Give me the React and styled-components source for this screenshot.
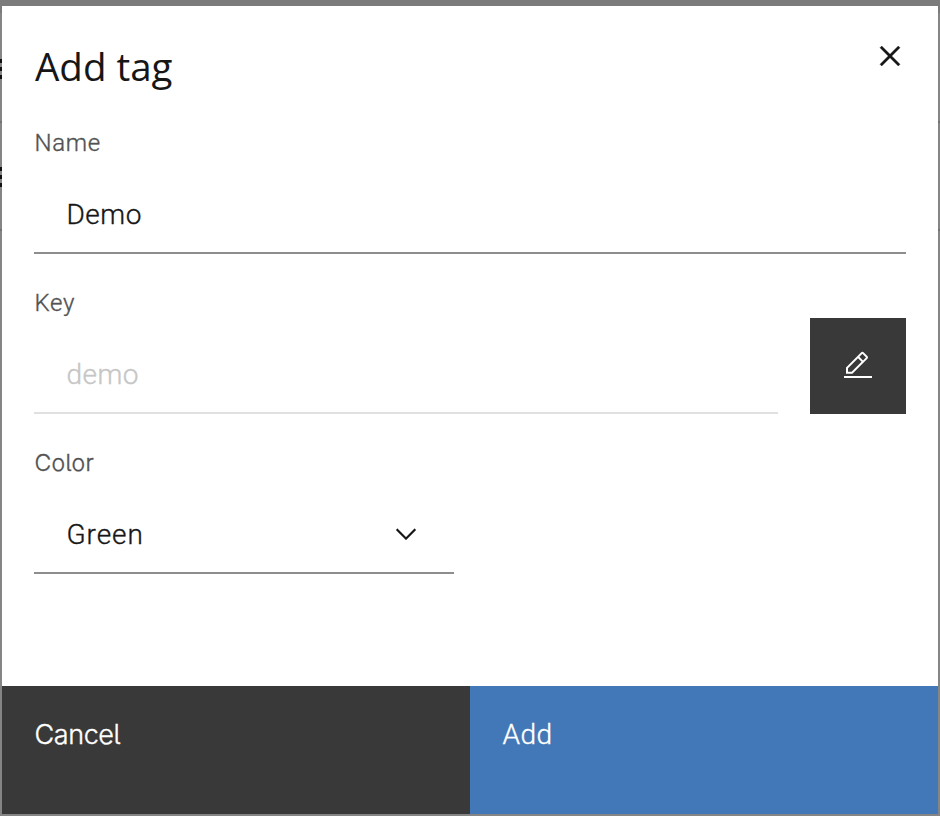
import React from "react";
import styled, { createGlobalStyle } from "styled-components";

const GlobalStyle = createGlobalStyle`
  *, *::before, *::after { box-sizing: border-box; }
  body { margin: 0; overflow: hidden; background: #858585; }
  button, input { font: inherit; letter-spacing: inherit; border: 0; border-radius: 0; margin: 0; }
`;

const Backdrop = styled.div`
  width: 940px;
  height: 816px;
  display: grid;
  grid-template-columns: 2px 936px 2px;
  padding: 6px 0 2px;
  background: linear-gradient(#7b7b7b 13px, #858585 13px);
  font-family: Roboto, "Liberation Sans", sans-serif;
  font-weight: 300;
  -webkit-text-stroke: 0.35px currentColor;
  color: #161616;
`;

const Rail = styled.div`
  display: flex;
  flex-direction: column;
`;

const RailCell = styled.div`
  height: ${(p) => p.$height}px;
  padding-top: ${(p) => p.$offset}px;
  border-bottom: 2px solid #727272;
`;

const MenuBars = styled.div`
  height: 20px;
  background: repeating-linear-gradient(#111 0 4px, transparent 4px 8px);
`;

const Modal = styled.section`
  display: flex;
  flex-direction: column;
  background: #fff;
`;

const Header = styled.header`
  display: flex;
  justify-content: space-between;
  height: 124px;
  padding: 0 0 0 33px;
`;

const Title = styled.h2`
  margin: 0;
  padding-top: 34px;
  font: 400 38.5px/52px "Open Sans", sans-serif;
  letter-spacing: 0;
  -webkit-text-stroke: 0;
`;

const CloseButton = styled.button`
  width: 96px;
  height: 96px;
  padding: 4px 0 0;
  display: grid;
  place-items: center;
  background: transparent;
  color: #161616;
`;

const Content = styled.div`
  flex: 1;
  display: flex;
  flex-direction: column;
  gap: 32px;
  padding: 0 32px;
`;

const FieldRow = styled.div`
  display: flex;
  align-items: flex-end;
  gap: 32px;
  height: 128px;
  padding-bottom: 4px;
`;

const Field = styled.div`
  width: ${(p) => p.$width};
  height: 124px;
  display: flex;
  flex-direction: column;
`;

const Label = styled.label`
  height: 28px;
  padding-left: 0.5px;
  color: #525252;
  font-size: ${(p) => (p.$tailed ? 23 : 24)}px;
  line-height: 26px;
  letter-spacing: ${(p) => (p.$tailed ? "0.3px" : "0.7px")};
  font-family: ${(p) => (p.$tailed ? "Inter" : "Roboto")}, sans-serif;
  font-feature-settings: "cv05" ${(p) => (p.$tailed ? 1 : 0)};
`;

const Control = styled.div`
  height: 96px;
  display: flex;
  align-items: center;
  justify-content: space-between;
  padding: 20px 32px 0 32.5px;
  border-bottom: 2px solid ${(p) => (p.$disabled ? "#e0e0e0" : "#8d8d8d")};
  color: ${(p) => (p.$disabled ? "#c6c6c6" : "#161616")};
  font-size: 28px;
  line-height: 36px;
  letter-spacing: ${(p) => p.$spacing || "0.5px"};
`;

const EditButton = styled.button`
  flex: none;
  width: 96px;
  height: 96px;
  display: grid;
  place-items: center;
  padding: 0 0 2px;
  background: #393939;
  color: #fff;
`;

const Footer = styled.footer`
  display: grid;
  grid-template-columns: 1fr 1fr;
  height: 128px;
`;

const FooterButton = styled.button`
  display: flex;
  align-items: flex-start;
  padding: 31px 32.5px;
  background: ${(p) => (p.$primary ? "#4378b8" : "#393939")};
  color: #fff;
  text-align: left;
  line-height: 36px;
  font-size: ${(p) => (p.$primary ? 28 : 27)}px;
  font-family: ${(p) => (p.$primary ? "Roboto" : "Inter")}, sans-serif;
  font-feature-settings: "cv05" ${(p) => (p.$primary ? 0 : 1)};
  letter-spacing: ${(p) => (p.$primary ? "0.5px" : "-0.4px")};
`;

const Icon = styled.svg`
  display: block;
  fill: currentColor;
`;

const ChevronIcon = styled(Icon)`
  margin-bottom: 2px;
`;

function BackgroundRail({ bars }) {
  return (
    <Rail>
      <RailCell $height={117} $offset={53}>{bars && <MenuBars />}</RailCell>
      <RailCell $height={108} $offset={44}>{bars && <MenuBars />}</RailCell>
    </Rail>
  );
}

export default function App() {
  return (
    <>
      <GlobalStyle />
      <Backdrop>
        <BackgroundRail bars />
        <Modal role="dialog" aria-label="Add tag">
          <Header>
            <Title>Add tag</Title>
            <CloseButton aria-label="Close">
              <Icon width="40" height="40" viewBox="0 0 32 32">
                <path d="M24 9.4 22.6 8 16 14.6 9.4 8 8 9.4 14.6 16 8 22.6 9.4 24 16 17.4 22.6 24 24 22.6 17.4 16z" stroke="currentColor" strokeWidth="0.3" />
              </Icon>
            </CloseButton>
          </Header>
          <Content>
            <FieldRow>
              <Field $width="100%">
                <Label>Name</Label>
                <Control>Demo</Control>
              </Field>
            </FieldRow>
            <FieldRow>
              <Field $width="744px">
                <Label>Key</Label>
                <Control $disabled>demo</Control>
              </Field>
              <EditButton aria-label="Edit key">
                <Icon width="32" height="32" viewBox="0 0 32 32">
                  <path d="M2 27h28v2H2z" />
                  <path transform="translate(0 0.8)" d="M25.4 9c.8-.8.8-2 0-2.800l-3.600-3.600c-.8-.8-2-.8-2.800 0l-15 15V24h6.400l15-15zm-5-5L24 7.600l-3 3L17.400 7l3-3zM6 22v-3.600l10-10 3.600 3.600-10 10H6z" />
                </Icon>
              </EditButton>
            </FieldRow>
            <FieldRow>
              <Field $width="420px">
                <Label $tailed>Color</Label>
                <Control $spacing="0.9px">
                  Green
                  <ChevronIcon width="32" height="32" viewBox="0 0 16 16">
                    <path d="M8 11 3 6l.7-.7L8 9.600l4.300-4.300.7.7z" stroke="currentColor" strokeWidth="0.1" />
                  </ChevronIcon>
                </Control>
              </Field>
            </FieldRow>
          </Content>
          <Footer>
            <FooterButton>Cancel</FooterButton>
            <FooterButton $primary>Add</FooterButton>
          </Footer>
        </Modal>
        <BackgroundRail />
      </Backdrop>
    </>
  );
}
